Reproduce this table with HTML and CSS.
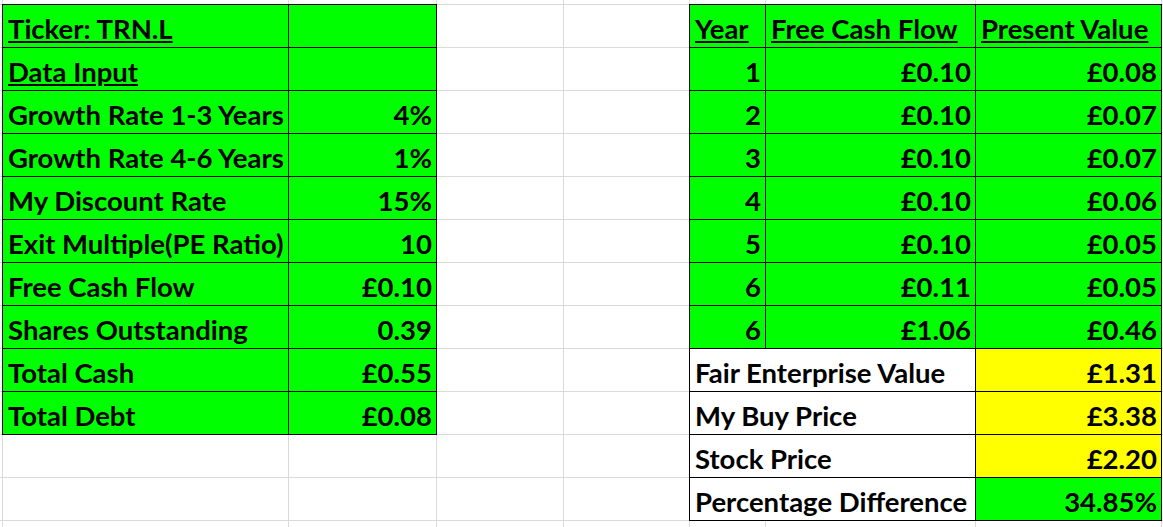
FILE: index.html
```html
<!DOCTYPE html>
<html>
<head>
<meta charset="utf-8">
<link rel="stylesheet" href="styles.css">
</head>
<body>
<div class="sheet">
  <!-- row 0 -->
  <div class="c"></div><div class="c"></div><div class="c"></div><div class="c"></div><div class="c"></div><div class="c"></div><div class="c"></div><div class="c"></div><div class="c"></div>
  <!-- row 1 -->
  <div class="c"></div>
  <div class="c t g"><span class="u">Ticker: TRN.L</span></div>
  <div class="c t g"></div>
  <div class="c"></div><div class="c"></div>
  <div class="c t g"><span class="u">Year</span></div>
  <div class="c t g"><span class="u">Free Cash Flow</span></div>
  <div class="c t g"><span class="u">Present Value</span></div>
  <div class="c"></div>
  <!-- row 2 -->
  <div class="c"></div>
  <div class="c t g"><span class="u">Data Input</span></div>
  <div class="c t g"></div>
  <div class="c"></div><div class="c"></div>
  <div class="c t g r">1</div>
  <div class="c t g r">£0.10</div>
  <div class="c t g r">£0.08</div>
  <div class="c"></div>
  <!-- row 3 -->
  <div class="c"></div>
  <div class="c t g">Growth Rate 1-3 Years</div>
  <div class="c t g r">4%</div>
  <div class="c"></div><div class="c"></div>
  <div class="c t g r">2</div>
  <div class="c t g r">£0.10</div>
  <div class="c t g r">£0.07</div>
  <div class="c"></div>
  <!-- row 4 -->
  <div class="c"></div>
  <div class="c t g">Growth Rate 4-6 Years</div>
  <div class="c t g r">1%</div>
  <div class="c"></div><div class="c"></div>
  <div class="c t g r">3</div>
  <div class="c t g r">£0.10</div>
  <div class="c t g r">£0.07</div>
  <div class="c"></div>
  <!-- row 5 -->
  <div class="c"></div>
  <div class="c t g">My Discount Rate</div>
  <div class="c t g r">15%</div>
  <div class="c"></div><div class="c"></div>
  <div class="c t g r">4</div>
  <div class="c t g r">£0.10</div>
  <div class="c t g r">£0.06</div>
  <div class="c"></div>
  <!-- row 6 -->
  <div class="c"></div>
  <div class="c t g">Exit Multiple(PE Ratio)</div>
  <div class="c t g r">10</div>
  <div class="c"></div><div class="c"></div>
  <div class="c t g r">5</div>
  <div class="c t g r">£0.10</div>
  <div class="c t g r">£0.05</div>
  <div class="c"></div>
  <!-- row 7 -->
  <div class="c"></div>
  <div class="c t g">Free Cash Flow</div>
  <div class="c t g r">£0.10</div>
  <div class="c"></div><div class="c"></div>
  <div class="c t g r">6</div>
  <div class="c t g r">£0.11</div>
  <div class="c t g r">£0.05</div>
  <div class="c"></div>
  <!-- row 8 -->
  <div class="c"></div>
  <div class="c t g">Shares Outstanding</div>
  <div class="c t g r">0.39</div>
  <div class="c"></div><div class="c"></div>
  <div class="c t g r">6</div>
  <div class="c t g r">£1.06</div>
  <div class="c t g r">£0.46</div>
  <div class="c"></div>
  <!-- row 9 -->
  <div class="c"></div>
  <div class="c t g">Total Cash</div>
  <div class="c t g r">£0.55</div>
  <div class="c"></div><div class="c"></div>
  <div class="c t w span2">Fair Enterprise Value</div>
  <div class="c t y r">£1.31</div>
  <div class="c"></div>
  <!-- row 10 -->
  <div class="c"></div>
  <div class="c t g">Total Debt</div>
  <div class="c t g r">£0.08</div>
  <div class="c"></div><div class="c"></div>
  <div class="c t w span2">My Buy Price</div>
  <div class="c t y r">£3.38</div>
  <div class="c"></div>
  <!-- row 11 -->
  <div class="c"></div><div class="c"></div><div class="c"></div><div class="c"></div><div class="c"></div>
  <div class="c t w span2">Stock Price</div>
  <div class="c t y r">£2.20</div>
  <div class="c"></div>
  <!-- row 12 -->
  <div class="c"></div><div class="c"></div><div class="c"></div><div class="c"></div><div class="c"></div>
  <div class="c t w span2">Percentage Difference</div>
  <div class="c t g r">34.85%</div>
  <div class="c"></div>
  <!-- row 13 -->
  <div class="c"></div><div class="c"></div><div class="c"></div><div class="c"></div><div class="c"></div><div class="c"></div><div class="c"></div><div class="c"></div><div class="c"></div>
</div>
</body>
</html>
```

FILE: styles.css
```css
html, body {
  margin: 0;
  padding: 0;
  background: #ffffff;
  overflow: hidden;
}

.sheet {
  width: 1163px;
  height: 527px;
  display: grid;
  grid-template-columns: 2px 285px 147px 126px 125px 75px 209px 185px 1fr;
  grid-template-rows: 4px repeat(12, 42px) 1fr;
  gap: 1px;
  background: #dadada;
  font-family: Lato, "Open Sans", sans-serif;
  font-weight: 700;
  font-size: 27.5px;
  color: #000;
}

.c {
  background: #ffffff;
  min-width: 0;
  overflow: hidden;
}

.t {
  display: flex;
  align-items: flex-end;
  justify-content: flex-start;
  padding: 0 4px 3px 5px;
  line-height: 30px;
  white-space: nowrap;
  box-shadow: 0 0 0 1px #000;
  overflow: visible;
}

.r {
  justify-content: flex-end;
}

.g { background: #00ff00; }
.y { background: #ffff00; }
.w { background: #ffffff; }

.span2 { grid-column: span 2; }

.u {
  text-decoration: underline;
  text-decoration-thickness: 2px;
  text-underline-offset: 2px;
}
```
